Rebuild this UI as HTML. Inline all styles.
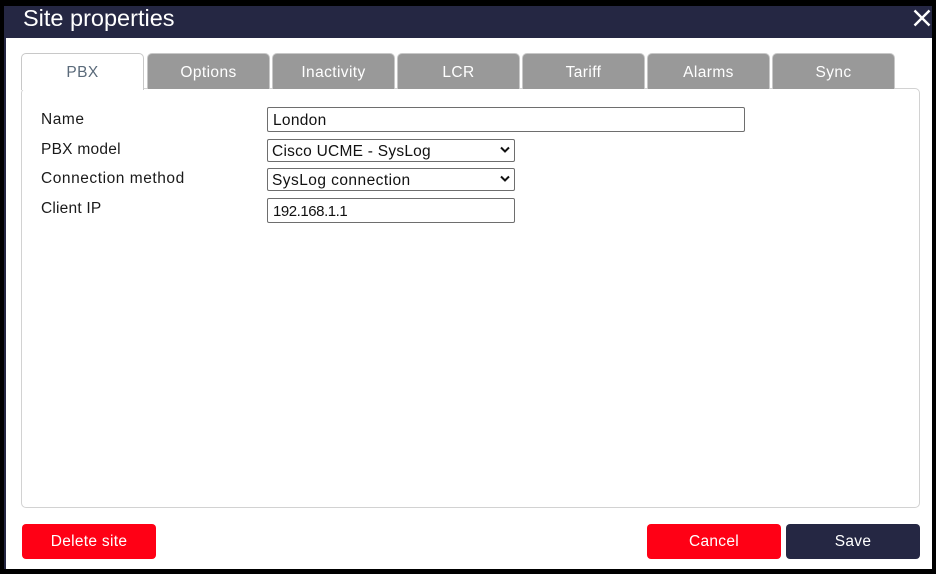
<!DOCTYPE html>
<html><head><meta charset="utf-8"><style>
html,body{margin:0;padding:0;background:#000;}
body{width:936px;height:574px;position:relative;overflow:hidden;font-family:"Liberation Sans",sans-serif;}
div,span{position:absolute;white-space:nowrap;box-sizing:border-box;}
.tab{top:53px;height:36px;background:#999;border:1px solid #c8c8c8;border-bottom:0;border-radius:5px 5px 0 0;color:#fff;font-size:15.5px;text-align:center;line-height:38px;letter-spacing:.4px;}
.lbl{left:41px;font-size:15.5px;color:#1a1a1a;letter-spacing:.55px;line-height:20px;}
.inp{background:#fff;border:1px solid #6e6e6e;border-radius:2px;color:#111;font-size:15.5px;letter-spacing:.45px;line-height:24px;}
.btn{top:524px;height:35px;border-radius:4px;color:#fff;font-size:15.5px;text-align:center;line-height:36px;letter-spacing:.3px;}
</style></head><body>
<div style="left:4px;top:6px;width:928px;height:563px;background:#fff;border-left:2px solid #252743;"></div>
<div style="left:4px;top:6px;width:928px;height:32px;background:#252743;"></div>
<div style="left:23px;top:4px;font-size:23.5px;color:#fff;line-height:28px;letter-spacing:0;">Site properties</div>
<svg style="position:absolute;left:912px;top:8px;" width="20" height="20" viewBox="0 0 20 20"><path d="M2.5 2.5L17.5 17.5M17.5 2.5L2.5 17.5" stroke="#fff" stroke-width="2.4" fill="none"/></svg>
<div style="left:21px;top:88px;width:899px;height:420px;border:1px solid #d2d2d2;border-radius:5px;background:#fff;"></div>
<div class="tab" style="left:21px;width:123px;height:37px;background:#fff;color:#5a6a7a;z-index:2;">PBX</div>
<div class="tab" style="left:147px;width:123px;">Options</div>
<div class="tab" style="left:272px;width:123px;">Inactivity</div>
<div class="tab" style="left:397px;width:123px;">LCR</div>
<div class="tab" style="left:522px;width:123px;">Tariff</div>
<div class="tab" style="left:647px;width:123px;">Alarms</div>
<div class="tab" style="left:772px;width:123px;">Sync</div>
<div class="lbl" style="top:110px;">Name</div>
<div class="lbl" style="top:140px;letter-spacing:.25px;">PBX model</div>
<div class="lbl" style="top:169px;">Connection method</div>
<div class="lbl" style="top:199px;letter-spacing:.2px;">Client IP</div>
<div class="inp" style="left:267px;top:107px;width:478px;height:25px;padding-left:5px;letter-spacing:.3px;line-height:25px;">London</div>
<div class="inp" style="left:267px;top:139px;width:248px;height:23px;padding-left:4px;line-height:23px;letter-spacing:.25px;">Cisco UCME - SysLog<svg style="position:absolute;left:232px;top:6px;" width="10" height="8" viewBox="0 0 10 8"><path d="M1 1.5L5 5.5L9 1.5" stroke="#111" stroke-width="2" fill="none"/></svg></div>
<div class="inp" style="left:267px;top:168px;width:248px;height:23px;padding-left:4px;line-height:23px;">SysLog connection<svg style="position:absolute;left:232px;top:6px;" width="10" height="8" viewBox="0 0 10 8"><path d="M1 1.5L5 5.5L9 1.5" stroke="#111" stroke-width="2" fill="none"/></svg></div>
<div class="inp" style="left:267px;top:198px;width:248px;height:25px;padding-left:5px;font-size:15px;letter-spacing:-.45px;line-height:25px;">192.168.1.1</div>
<div class="btn" style="left:22px;width:134px;background:#ff0015;">Delete site</div>
<div class="btn" style="left:647px;width:134px;background:#ff0015;">Cancel</div>
<div class="btn" style="left:786px;width:134px;background:#252743;">Save</div>
</body></html>
